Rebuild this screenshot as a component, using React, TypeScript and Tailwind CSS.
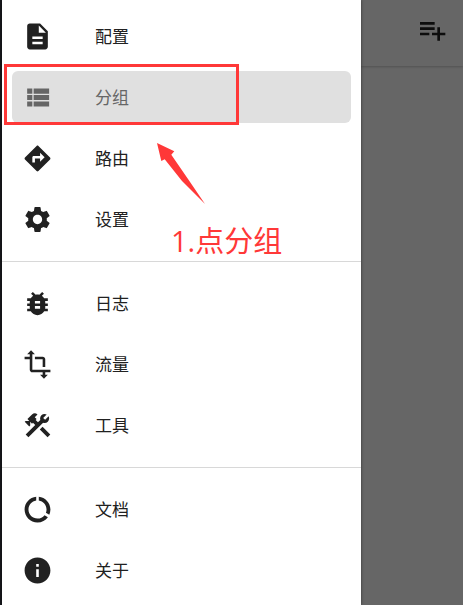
import type { ReactNode } from "react";
import {
  MdBugReport,
  MdConstruction,
  MdDataUsage,
  MdDescription,
  MdInfo,
  MdPlaylistAdd,
  MdSettings,
  MdTransform,
} from "react-icons/md";

type Item = { label: string; icon: ReactNode; selected?: boolean };

const iconClass = "size-[31px] shrink-0";

function ViewListIcon() {
  return (
    <svg viewBox="0 0 24 24" fill="currentColor" className={iconClass} aria-hidden="true">
      <path d="M4 14h4v-4H4v4zm0 5h4v-4H4v4zM4 9h4V5H4v4zm5 5h12v-4H9v4zm0 5h12v-4H9v4zM9 5v4h12V5H9z" />
    </svg>
  );
}

function DirectionsIcon() {
  return (
    <svg viewBox="0 0 24 24" fill="currentColor" className={iconClass} aria-hidden="true">
      <path d="M21.71 11.29l-9-9c-.39-.39-1.02-.39-1.41 0l-9 9c-.39.39-.39 1.02 0 1.41l9 9c.39.39 1.02.39 1.41 0l9-9c.39-.38.39-1.01 0-1.41zM14 14.5V12h-4v3H8v-4c0-.55.45-1 1-1h5V7.5l3.5 3.5-3.5 3.5z" />
    </svg>
  );
}

const groups: Item[][] = [
  [
    { label: "配置", icon: <MdDescription className={iconClass} /> },
    { label: "分组", icon: <ViewListIcon />, selected: true },
    { label: "路由", icon: <DirectionsIcon /> },
    { label: "设置", icon: <MdSettings className={iconClass} /> },
  ],
  [
    { label: "日志", icon: <MdBugReport className={iconClass} /> },
    { label: "流量", icon: <MdTransform className={iconClass} /> },
    { label: "工具", icon: <MdConstruction className={iconClass} /> },
  ],
  [
    { label: "文档", icon: <MdDataUsage className={iconClass} /> },
    { label: "关于", icon: <MdInfo className={iconClass} /> },
  ],
];

function NavItem({ label, icon, selected }: Item) {
  return (
    <li>
      <a
        href="#"
        aria-current={selected ? "page" : undefined}
        className={`flex h-[52px] items-center gap-[42px] rounded-md pl-[10px] text-[17px] leading-6 ${
          selected ? "bg-[#e0e0e0] text-[#666666]" : "text-[#212121]"
        }`}
      >
        {icon}
        <span>{label}</span>
      </a>
    </li>
  );
}

export default function App() {
  return (
    <div className="relative flex h-screen overflow-hidden bg-[#666666] font-['Noto_Sans_CJK_SC',sans-serif]">
      <div className="w-[2px] shrink-0 bg-[#17181c]" />
      <nav className="z-10 w-[359px] shrink-0 bg-white pt-[10px] shadow-[0_0_3px_rgba(0,0,0,0.5)]">
        {groups.map((group, i) => (
          <ul
            key={i}
            className={`flex flex-col gap-[9px] px-[10px] pb-4 ${
              i > 0 ? "border-t border-[#d8d8d8] pt-[15px]" : ""
            }`}
          >
            {group.map((item) => (
              <NavItem key={item.label} {...item} />
            ))}
          </ul>
        ))}
      </nav>
      <main className="min-w-0 flex-1">
        <header className="flex h-[66px] items-start justify-end pt-[14px] pr-[15px] shadow-[0_1px_2px_rgba(0,0,0,0.2)]">
          <button type="button" aria-label="添加分组" className="text-[#0d0d0d]">
            <MdPlaylistAdd className="size-8" />
          </button>
        </header>
      </main>

      <div className="pointer-events-none absolute top-16 left-1 z-20 h-[61px] w-[235px] border-[3px] border-[#ff3838]" />
      <svg
        viewBox="0 0 50 64"
        className="pointer-events-none absolute top-[142px] left-[156px] z-20 h-16 w-[50px] text-[#ff3838]"
        fill="currentColor"
        aria-hidden="true"
      >
        <path d="M1 1L18.3 9.3L15.3 12.7L32 37L49 62L26 39L8.7 17.3L5.3 19Z" />
      </svg>
      <p className="pointer-events-none absolute top-[221px] left-[171px] z-20 font-['Open_Sans','Noto_Sans_CJK_SC',sans-serif] text-[29px] leading-10 whitespace-nowrap text-[#ff3838]">
        1.点分组
      </p>
    </div>
  );
}
